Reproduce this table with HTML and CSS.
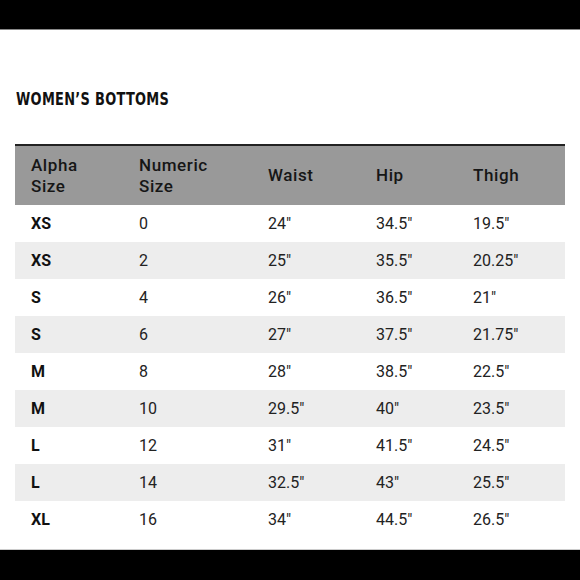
FILE: index.html
```html
<!DOCTYPE html>
<html>
<head>
<meta charset="utf-8">
<link rel="stylesheet" href="styles.css">
</head>
<body>
<div class="bar bar-top"></div>
<main class="content">
  <h1 class="title"><span class="title-text">WOMEN’S BOTTOMS</span></h1>
  <table class="sizes">
    <colgroup>
      <col class="c1"><col class="c2"><col class="c3"><col class="c4"><col class="c5">
    </colgroup>
    <thead>
      <tr><th>Alpha<br>Size</th><th>Numeric<br>Size</th><th>Waist</th><th>Hip</th><th>Thigh</th></tr>
    </thead>
    <tbody>
      <tr><td>XS</td><td>0</td><td>24"</td><td>34.5"</td><td>19.5"</td></tr>
      <tr><td>XS</td><td>2</td><td>25"</td><td>35.5"</td><td>20.25"</td></tr>
      <tr><td>S</td><td>4</td><td>26"</td><td>36.5"</td><td>21"</td></tr>
      <tr><td>S</td><td>6</td><td>27"</td><td>37.5"</td><td>21.75"</td></tr>
      <tr><td>M</td><td>8</td><td>28"</td><td>38.5"</td><td>22.5"</td></tr>
      <tr><td>M</td><td>10</td><td>29.5"</td><td>40"</td><td>23.5"</td></tr>
      <tr><td>L</td><td>12</td><td>31"</td><td>41.5"</td><td>24.5"</td></tr>
      <tr><td>L</td><td>14</td><td>32.5"</td><td>43"</td><td>25.5"</td></tr>
      <tr><td>XL</td><td>16</td><td>34"</td><td>44.5"</td><td>26.5"</td></tr>
    </tbody>
  </table>
</main>
<div class="bar bar-bottom"></div>
</body>
</html>
```
FILE: styles.css
```css
html, body {
  margin: 0;
  padding: 0;
  background: #fff;
}
body {
  width: 580px;
  height: 580px;
  display: flex;
  flex-direction: column;
  overflow: hidden;
  font-family: Roboto, "Liberation Sans", sans-serif;
  color: #1a1a1a;
}
.bar {
  background: #000;
  flex: none;
}
.bar-top {
  height: 29px;
  border-bottom: 1px solid #888;
}
.bar-bottom {
  height: 31px;
  border-top: 1px solid #ccc;
  box-sizing: border-box;
}
.content {
  flex: 1;
  padding: 60px 15px 0 15px;
}
.title {
  margin: 0 0 36px 1px;
  font-family: "DejaVu Sans", sans-serif;
  font-weight: bold;
  font-size: 18px;
  line-height: 18px;
  letter-spacing: 0.4px;
  color: #111;
}
.title-text {
  display: inline-block;
  transform: scaleX(0.72);
  transform-origin: left center;
}
.sizes {
  width: 550px;
  border-collapse: collapse;
  table-layout: fixed;
}
.c1 { width: 108px; }
.c2 { width: 129px; }
.c3 { width: 108px; }
.c4 { width: 97px; }
.c5 { width: 108px; }
.sizes thead tr {
  background: #999;
  border-top: 2px solid #222;
}
.sizes th {
  height: 59px;
  padding: 0 0 0 16px;
  text-align: left;
  vertical-align: middle;
  font-weight: 500;
  font-size: 17px;
  line-height: 21px;
  letter-spacing: 0.6px;
  color: #161616;
}
.sizes td {
  height: 37px;
  padding: 0 0 0 16px;
  font-size: 16px;
  color: #222;
}
.sizes td:first-child {
  font-weight: 700;
  color: #111;
}
.sizes tbody tr:nth-child(even) {
  background: #ededed;
}
```
